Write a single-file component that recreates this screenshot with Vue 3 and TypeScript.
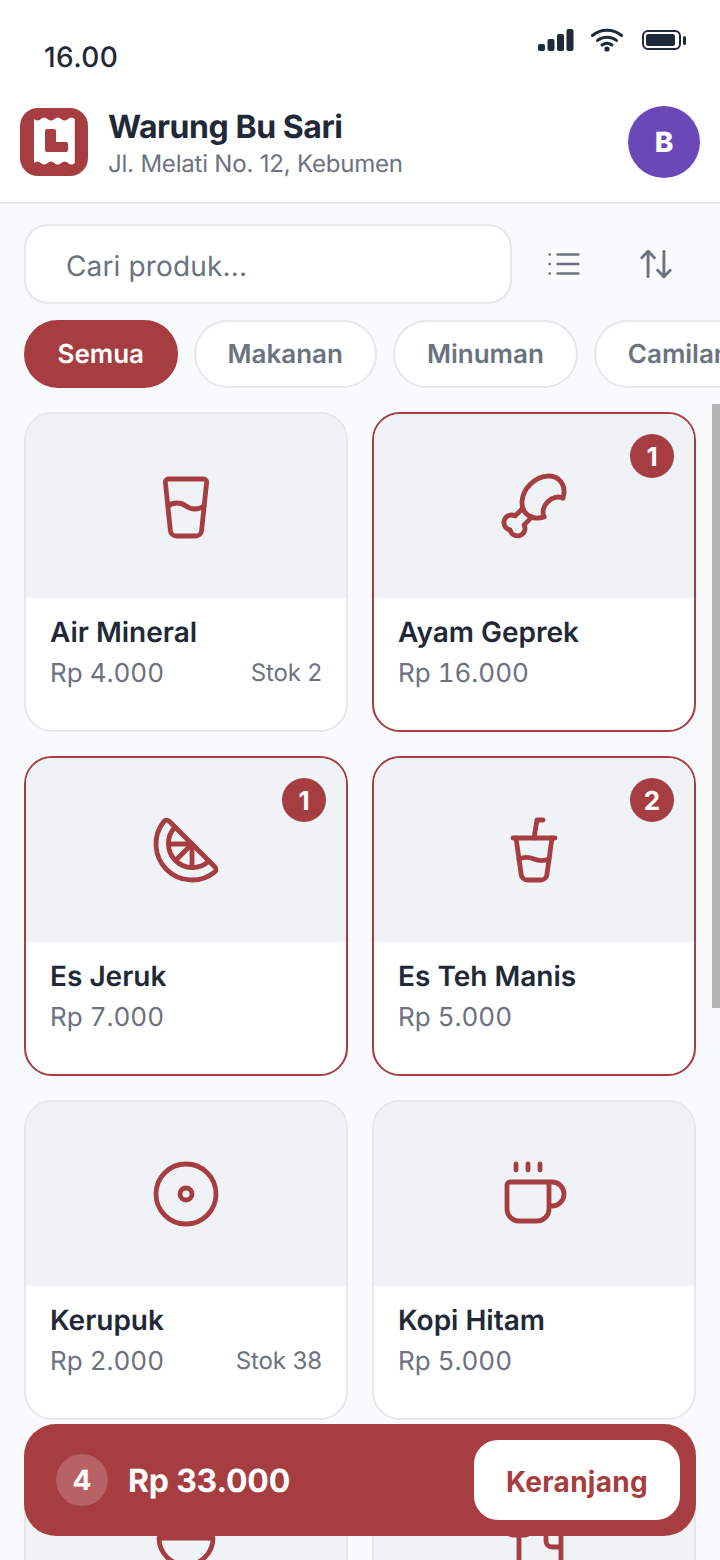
<script setup lang="ts">
interface Product {
  name: string
  price: string
  qty?: number
  stock?: number
  icon: string[]
  circles?: number[][]
}

const categories = ['Semua', 'Makanan', 'Minuman', 'Camilan']

const products: Product[] = [
  {
    name: 'Air Mineral',
    price: 'Rp 4.000',
    stock: 2,
    icon: [
      'M5.116 4.104A1 1 0 0 1 6.11 3h11.78a1 1 0 0 1 .994 1.105L17.19 20.21A2 2 0 0 1 15.2 22H8.8a2 2 0 0 1-2-1.79z',
      'M6 12a5 5 0 0 1 6 0 5 5 0 0 0 6 0',
    ],
  },
  {
    name: 'Ayam Geprek',
    price: 'Rp 16.000',
    qty: 1,
    icon: [
      'M15.4 15.63a7.875 6 135 1 1 6.23-6.23 4.5 3.43 135 0 0-6.23 6.23',
      'm8.29 12.71-2.6 2.6a2.5 2.5 0 1 0-1.65 4.65A2.5 2.5 0 1 0 8.7 18.3l2.59-2.59',
    ],
  },
  {
    name: 'Es Jeruk',
    price: 'Rp 7.000',
    qty: 1,
    icon: [
      'M21.66 17.67a1.08 1.08 0 0 1-.04 1.6A12 12 0 0 1 4.73 2.38a1.1 1.1 0 0 1 1.61-.04z',
      'M19.65 15.66A8 8 0 0 1 8.35 4.34',
      'm14 10-5.5 5.5',
      'M14 17.85V10H6.15',
    ],
  },
  {
    name: 'Es Teh Manis',
    price: 'Rp 5.000',
    qty: 2,
    icon: [
      'm6 8 1.75 12.28a2 2 0 0 0 2 1.72h4.54a2 2 0 0 0 2-1.72L18 8',
      'M5 8h14',
      'M7 15a6.47 6.47 0 0 1 5 0 6.47 6.47 0 0 0 5 0',
      'm12 8 1-6h2',
    ],
  },
  {
    name: 'Kerupuk',
    price: 'Rp 2.000',
    stock: 38,
    icon: [],
    circles: [
      [12, 12, 10],
      [12, 12, 2],
    ],
  },
  {
    name: 'Kopi Hitam',
    price: 'Rp 5.000',
    icon: [
      'M10 2v2',
      'M14 2v2',
      'M16 8a1 1 0 0 1 1 1v8a4 4 0 0 1-4 4H7a4 4 0 0 1-4-4V9a1 1 0 0 1 1-1h14a4 4 0 1 1 0 8h-1',
      'M6 2v2',
    ],
  },
  {
    name: 'Mie Ayam',
    price: 'Rp 12.000',
    icon: [
      'M12 21a9 9 0 0 0 9-9H3a9 9 0 0 0 9 9Z',
      'M7 21h10',
      'M19.5 12 22 6',
    ],
  },
  {
    name: 'Nasi Goreng',
    price: 'Rp 15.000',
    icon: [
      'M3 2v7c0 1.1.9 2 2 2h4a2 2 0 0 0 2-2V2',
      'M7 2v20',
      'M21 15V2a5 5 0 0 0-5 5v6c0 1.1.9 2 2 2h3Zm0 0v7',
    ],
  },
]
</script>

<template>
  <div class="app">
    <div class="status">
      <span class="time">16.00</span>
      <div class="status-icons">
        <svg width="36" height="22" viewBox="0 0 36 22" fill="#1f2937">
          <rect x="0" y="15" width="7" height="7" rx="2" />
          <rect x="9.5" y="10" width="7" height="12" rx="2" />
          <rect x="19" y="5" width="7" height="17" rx="2" />
          <rect x="28.5" y="0" width="7" height="22" rx="2" />
        </svg>
        <svg class="wifi" width="32" height="24" viewBox="0 0 32 24" fill="none" stroke="#1f2937" stroke-width="3" stroke-linecap="round">
          <path d="M1.5 7.5C9.5 .5 22.500 .5 30.500 7.500" />
          <path d="M6.500 12.500C11.500 8 20.500 8 25.500 12.500" />
          <path d="M11 17c3-2.200 7-2.200 10 0" />
          <circle cx="16" cy="21" r="2.600" fill="#1f2937" stroke="none" />
        </svg>
        <svg class="battery" width="44" height="20" viewBox="0 0 44 20" fill="none">
          <rect x="1" y="1" width="37" height="18" rx="5" stroke="#1f2937" stroke-width="2" />
          <rect x="4" y="4" width="29" height="12" rx="2.500" fill="#1f2937" />
          <rect x="41" y="6" width="3" height="9" rx="1.500" fill="#1f2937" />
        </svg>
      </div>
    </div>

    <header class="header">
      <div class="logo">
        <svg width="68" height="68" viewBox="0 0 68 68">
          <path
            fill="#fff"
            d="M14 11q3.400 3 6.800 0t6.800 0 6.800 0 6.800 0 6.800 0 6.800 0V55q-3.400 3-6.800 0t-6.800 0-6.800 0-6.800 0-6.800 0-6.800 0z"
          />
          <path
            fill="#a63d40"
            d="M27 21h7a2 2 0 0 1 2 2v11h10a2 2 0 0 1 2 2v6a2 2 0 0 1-2 2H27a2 2 0 0 1-2-2V23a2 2 0 0 1 2-2z"
          />
        </svg>
      </div>
      <div class="shop">
        <h1>Warung Bu Sari</h1>
        <p>Jl. Melati No. 12, Kebumen</p>
      </div>
      <div class="avatar">B</div>
    </header>

    <main class="main">
      <div class="search-row">
        <div class="search">Cari produk...</div>
        <button class="tool">
          <svg width="38" height="38" viewBox="0 0 24 24" fill="none" stroke="#6b7280" stroke-width="1.700" stroke-linecap="round" stroke-linejoin="round">
            <path d="M3 12h.01" />
            <path d="M3 18h.01" />
            <path d="M3 6h.01" />
            <path d="M8 12h13" />
            <path d="M8 18h13" />
            <path d="M8 6h13" />
          </svg>
        </button>
        <button class="tool">
          <svg width="38" height="38" viewBox="0 0 24 24" fill="none" stroke="#6b7280" stroke-width="1.800" stroke-linecap="round" stroke-linejoin="round">
            <path d="m21 16-4 4-4-4" />
            <path d="M17 20V4" />
            <path d="m3 8 4-4 4 4" />
            <path d="M7 4v16" />
          </svg>
        </button>
      </div>

      <div class="chips">
        <span v-for="(c, i) in categories" :key="c" class="chip" :class="{ active: i === 0 }">{{ c }}</span>
      </div>

      <div class="grid">
        <div v-for="p in products" :key="p.name" class="card" :class="{ selected: p.qty }">
          <div class="thumb">
            <svg width="72" height="72" viewBox="0 0 24 24" fill="none" stroke="#a63d40" stroke-width="1.600" stroke-linecap="round" stroke-linejoin="round">
              <path v-for="d in p.icon" :key="d" :d="d" />
              <circle v-for="c in p.circles" :key="c[2]" :cx="c[0]" :cy="c[1]" :r="c[2]" />
            </svg>
            <span v-if="p.qty" class="badge">{{ p.qty }}</span>
          </div>
          <div class="info">
            <div class="name">{{ p.name }}</div>
            <div class="meta">
              <span class="price">{{ p.price }}</span>
              <span v-if="p.stock" class="stock">Stok {{ p.stock }}</span>
            </div>
          </div>
        </div>
      </div>
    </main>

    <div class="scrollbar"></div>

    <div class="cart">
      <span class="count">4</span>
      <span class="total">Rp 33.000</span>
      <button class="cart-btn">Keranjang</button>
    </div>
  </div>
</template>

<style scoped>
.app {
  position: relative;
  display: flex;
  flex-direction: column;
  width: 720px;
  height: 1560px;
  overflow: hidden;
  background: #f8fafc;
  font-family: Inter, 'Liberation Sans', sans-serif;
  color: #1f2937;
  text-rendering: geometricPrecision;
}

.status {
  display: flex;
  justify-content: space-between;
  height: 96px;
  flex-shrink: 0;
  background: #fff;
  box-sizing: border-box;
  padding: 0 34px 0 44px;
}

.time {
  font-size: 28px;
  font-weight: 500;
  line-height: 34px;
  letter-spacing: 0.4px;
  margin-top: 40px;
}

.status-icons {
  display: flex;
  gap: 17px;
  align-items: flex-start;
  padding-top: 29px;
}

.wifi {
  margin-top: -1px;
}

.battery {
  margin-top: 1px;
  margin-left: 2px;
}

.header {
  display: flex;
  align-items: center;
  gap: 20px;
  height: 108px;
  flex-shrink: 0;
  box-sizing: border-box;
  padding: 10px 20px 24px;
  background: #fff;
  border-bottom: 2px solid #e5e7eb;
}

.logo {
  width: 68px;
  height: 68px;
  border-radius: 18px;
  background: #a63d40;
  flex-shrink: 0;
}

.logo svg {
  display: block;
}

.shop {
  flex: 1;
  padding-top: 2px;
}

.shop h1 {
  margin: 0;
  font-size: 32px;
  font-weight: 700;
  line-height: 38px;
  letter-spacing: -0.45px;
}

.shop p {
  margin: 4px 0 0;
  font-size: 24px;
  line-height: 28px;
  letter-spacing: -0.2px;
  color: #6b7280;
}

.avatar {
  display: flex;
  align-items: center;
  justify-content: center;
  width: 72px;
  height: 72px;
  border-radius: 50%;
  background: #6b48b8;
  color: #fff;
  font-size: 28px;
  font-weight: 800;
}

.main {
  flex: 1;
  min-height: 0;
  box-sizing: border-box;
  padding: 20px 24px 0;
}

.search-row {
  display: flex;
  gap: 12px;
  height: 80px;
}

.search {
  flex: 1;
  display: flex;
  align-items: center;
  box-sizing: border-box;
  padding-left: 40px;
  padding-top: 4px;
  background: #fff;
  border: 2px solid #e5e7eb;
  border-radius: 24px;
  font-size: 28px;
  letter-spacing: 0.15px;
  color: #6b7280;
}

.tool {
  display: flex;
  align-items: center;
  justify-content: center;
  width: 80px;
  height: 80px;
  padding: 0;
  border: 0;
  background: none;
}

.chips {
  display: flex;
  gap: 16px;
  margin-top: 16px;
  height: 68px;
}

.chip {
  flex-shrink: 0;
  display: flex;
  align-items: center;
  box-sizing: border-box;
  padding: 0 32px;
  border: 2px solid #e5e7eb;
  border-radius: 34px;
  background: #fff;
  font-size: 26px;
  font-weight: 600;
  color: #6b7280;
}

.chip.active {
  padding: 0 31.5px;
  background: #a63d40;
  border-color: #a63d40;
  color: #fff;
}

.grid {
  display: grid;
  grid-template-columns: 324px 324px;
  grid-auto-rows: 320px;
  gap: 24px;
  margin-top: 24px;
}

.card {
  box-sizing: border-box;
  border: 2px solid #e5e7eb;
  border-radius: 28px;
  background: #fff;
  overflow: hidden;
}

.card.selected {
  border-color: #a63d40;
}

.thumb {
  position: relative;
  display: flex;
  align-items: center;
  justify-content: center;
  height: 184px;
  background: #eff3f6;
}

.badge {
  position: absolute;
  top: 20px;
  right: 20px;
  display: flex;
  align-items: center;
  justify-content: center;
  box-sizing: border-box;
  padding-top: 2px;
  width: 44px;
  height: 44px;
  border-radius: 50%;
  background: #a63d40;
  color: #fff;
  font-size: 26px;
  font-weight: 700;
}

.info {
  padding: 16px 24px;
}

.name {
  font-size: 28px;
  font-weight: 600;
  line-height: 36px;
}

.meta {
  display: flex;
  justify-content: space-between;
  align-items: center;
  margin-top: 5px;
  height: 36px;
}

.price {
  font-size: 26px;
  font-variant-numeric: tabular-nums;
  color: #6b7280;
}

.stock {
  padding-bottom: 2px;
  font-size: 24px;
  letter-spacing: -0.1px;
  color: #6b7280;
}

.scrollbar {
  position: absolute;
  top: 404px;
  right: 0;
  width: 8px;
  height: 604px;
  background: #b4b4b4;
}

.cart {
  position: absolute;
  left: 24px;
  right: 24px;
  top: 1424px;
  display: flex;
  align-items: center;
  box-sizing: border-box;
  height: 112px;
  padding: 0 16px 0 32px;
  border-radius: 32px;
  background: #a63d40;
  color: #fff;
}

.count {
  display: flex;
  align-items: center;
  justify-content: center;
  width: 52px;
  height: 52px;
  border-radius: 50%;
  background: rgba(255, 255, 255, 0.2);
  font-size: 28px;
  font-weight: 700;
}

.total {
  flex: 1;
  margin-left: 20px;
  font-size: 32px;
  font-weight: 700;
  letter-spacing: -0.2px;
}

.cart-btn {
  width: 206px;
  height: 80px;
  padding: 3px 0 0;
  border: 0;
  border-radius: 24px;
  background: #fff;
  color: #a63d40;
  font-family: inherit;
  font-size: 28px;
  font-weight: 700;
  letter-spacing: 0.3px;
}
</style>
